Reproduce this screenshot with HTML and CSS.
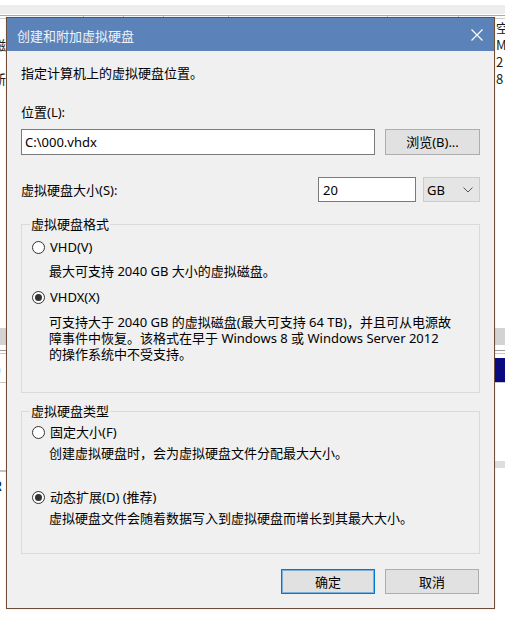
FILE: index.html
```html
<!DOCTYPE html>
<html lang="zh-CN">
<head>
<meta charset="utf-8">
<title>创建和附加虚拟硬盘</title>
<link rel="stylesheet" href="styles.css">
</head>
<body>
<div class="bg">
  <div class="bg-gap5"></div>
  <div class="bg-band"></div>
  <div class="bg-gap1"></div>
  <div class="bg-line-dark"></div>
  <div class="bg-head">
    <span class="sep s1"></span><span class="sep s2"></span><span class="sep s3"></span><span class="sep s4"></span><span class="sep s5"></span><span class="sep s6"></span>
  </div>
  <div class="bg-line-light"></div>
  <div class="bg-rows">
    <div class="bg-row"><span class="lt"></span><span class="rt">空</span></div>
    <div class="bg-row"><span class="lt">磁</span><span class="rt">M</span></div>
    <div class="bg-row"><span class="lt orange">c</span><span class="rt">2</span></div>
    <div class="bg-row"><span class="lt">新</span><span class="rt">8</span></div>
  </div>
  <div class="bg-band2"></div>
  <div class="bg-gap5"></div>
  <div class="bg-line-mid"></div>
  <div class="bg-gap2"></div>
  <div class="bg-line-light"></div>
  <div class="bg-gap4"></div>
  <div class="bg-sel"><span class="lt blue">0</span><span class="navy"></span></div>
  <div class="bg-line-light"></div>
  <div class="bg-fill"><span class="gray-r"></span></div>
  <div class="bg-line-left"></div>
  <div class="bg-row last"><span class="lt blue">R</span><span class="rt"></span></div>
</div>

<div class="dialog">
  <div class="titlebar">
    <span class="title">创建和附加虚拟硬盘</span>
    <svg class="close" width="12" height="12" viewBox="0 0 12 12"><path d="M0.5 0.5 L11.5 11.5 M11.5 0.5 L0.5 11.5" stroke="#ffffff" stroke-width="1.2" fill="none"/></svg>
  </div>
  <div class="content">
    <p class="intro">指定计算机上的虚拟硬盘位置。</p>
    <p class="label">位置(L):</p>
    <div class="path-row">
      <div class="textbox path">C:\000.vhdx</div>
      <div class="btn browse">浏览(B)...</div>
    </div>
    <div class="size-row">
      <span class="size-label">虚拟硬盘大小(S):</span>
      <div class="textbox size">20</div>
      <div class="combo"><span>GB</span><svg width="10" height="6" viewBox="0 0 10 6"><path d="M0.5 0.5 L5 5 L9.5 0.5" stroke="#555" stroke-width="1" fill="none"/></svg></div>
    </div>

    <fieldset class="group g-format">
      <legend>虚拟硬盘格式</legend>
      <div class="radio r1"><span class="circle"></span><span>VHD(V)</span></div>
      <p class="desc d1">最大可支持 2040 GB 大小的虚拟磁盘。</p>
      <div class="radio r2"><span class="circle on"></span><span>VHDX(X)</span></div>
      <p class="desc para">可支持大于 2040 GB 的虚拟磁盘(最大可支持 64 TB)，并且可从电源故<br>障事件中恢复。该格式在早于 Windows 8 或 Windows Server 2012<br>的操作系统中不受支持。</p>
    </fieldset>

    <fieldset class="group g-type">
      <legend>虚拟硬盘类型</legend>
      <div class="radio r3"><span class="circle"></span><span>固定大小(F)</span></div>
      <p class="desc d3">创建虚拟硬盘时，会为虚拟硬盘文件分配最大大小。</p>
      <div class="radio r4"><span class="circle on"></span><span>动态扩展(D) (推荐)</span></div>
      <p class="desc d4">虚拟硬盘文件会随着数据写入到虚拟硬盘而增长到其最大大小。</p>
    </fieldset>

    <div class="actions">
      <div class="btn ok">确定</div>
      <div class="btn">取消</div>
    </div>
  </div>
</div>
</body>
</html>
```

FILE: styles.css
```css
html, body {
  margin: 0;
  padding: 0;
}
body {
  width: 505px;
  height: 621px;
  overflow: hidden;
  position: relative;
  background: #ffffff;
  font-family: "Noto Sans", "Noto Sans CJK SC", sans-serif;
  font-size: 13px;
  color: #000;
}

/* ---------- background window ---------- */
.bg {
  display: flex;
  flex-direction: column;
}
.bg-gap5 { height: 5px; }
.bg-gap1 { height: 1px; }
.bg-gap2 { height: 2px; }
.bg-gap4 { height: 4px; }
.bg-band { height: 9px; background: #ededed; }
.bg-line-dark { height: 1px; background: #a9a9a9; }
.bg-line-mid { height: 1px; background: #9a9a9a; }
.bg-line-light { height: 1px; background: #c9c9c9; }
.bg-head {
  height: 2px;
  display: flex;
}
.sep { width: 1px; height: 2px; background: #c4c4c4; }
.s1 { margin-left: 83px; }
.s2 { margin-left: 39px; }
.s3 { margin-left: 39px; }
.s4 { margin-left: 64px; }
.s5 { margin-left: 158px; }
.s6 { margin-left: 70px; }
.bg-rows {
  height: 309px;
  display: flex;
  flex-direction: column;
}
.bg-row {
  height: 17px;
  line-height: 17px;
  display: flex;
  justify-content: space-between;
  font-family: "Noto Sans CJK SC", sans-serif;
  font-size: 13px;
  color: #1a1a1a;
}
.bg-row.last { margin-top: 5px; }
.lt { margin-left: -7px; width: 13px; }
.rt { width: 9px; }
.orange { color: #d08a20; }
.blue { color: #0a2a6a; font-weight: bold; }
.bg-band2 { height: 17px; background: #d3d3d3; }
.bg-sel {
  height: 24px;
  line-height: 24px;
  display: flex;
  justify-content: space-between;
  font-family: "Noto Sans", sans-serif;
}
.navy { width: 10px; background: #0a0a80; }
.bg-fill {
  height: 87px;
  display: flex;
  justify-content: flex-end;
  align-items: flex-end;
}
.gray-r { width: 10px; height: 7px; background: #dedede; margin-bottom: 2px; }
.bg-line-left { height: 2px; width: 7px; background: #c4c4c4; }

/* ---------- dialog ---------- */
.dialog {
  position: absolute;
  left: 6px;
  top: 17px;
  width: 487px;
  border: 1px solid #6e4d36;
  background: #f0f0f0;
  box-shadow: 0 0 0 1px rgba(0,0,0,0.04);
}
.titlebar {
  height: 33px;
  background: #5b83b9;
  display: flex;
  align-items: center;
  justify-content: space-between;
  padding: 0 11px 0 10px;
}
.title {
  font-family: "Noto Sans CJK SC", sans-serif;
  font-size: 13px;
  color: #eef3fa;
  line-height: 17px;
  margin-top: 1px;
}
.close { display: block; margin-top: 1px; }

.content {
  padding: 14px 14px 14px 14px;
  line-height: 16px;
}
p { margin: 0; }
.intro { line-height: 17px; }
.label { margin-top: 22px; line-height: 17px; }

.path-row {
  margin-top: 8px;
  display: flex;
  gap: 10px;
}
.textbox {
  box-sizing: border-box;
  background: #ffffff;
  border: 1px solid #7a7a7a;
  display: flex;
  align-items: center;
  padding-left: 3px;
  font-family: "Noto Sans", sans-serif;
}
.path { width: 354px; height: 26px; }
.btn {
  box-sizing: border-box;
  background: #e1e1e1;
  border: 1px solid #adadad;
  display: flex;
  align-items: center;
  justify-content: center;
  height: 25px;
  width: 94px;
  font-family: "Noto Sans", "Noto Sans CJK SC", sans-serif;
}
.browse { width: 95px; height: 26px; }

.size-row {
  margin-top: 22px;
  display: flex;
  align-items: center;
  height: 25px;
}
.size-label { flex: 1; }
.size { width: 98px; height: 25px; padding-left: 4px; }
.combo {
  box-sizing: border-box;
  margin-left: 7px;
  width: 57px;
  height: 25px;
  background: #e5e5e5;
  border: 1px solid #cccccc;
  display: flex;
  align-items: center;
  justify-content: space-between;
  padding: 0 6px 0 3px;
  font-family: "Noto Sans", sans-serif;
}

.group {
  margin: 0;
  border: 1px solid #dadada;
  padding: 0 10px;
  min-width: 0;
}
.group legend {
  padding: 0 1px;
  margin-left: -2px;
  line-height: 16px;
  font-family: "Noto Sans CJK SC", sans-serif;
}
.g-format { margin-top: 14px; padding-bottom: 30px; }
.g-type { margin-top: 10px; padding-bottom: 27px; }

.radio {
  display: flex;
  align-items: center;
  gap: 5px;
  height: 16px;
}
.circle {
  box-sizing: border-box;
  width: 13px;
  height: 13px;
  border: 1px solid #333333;
  border-radius: 50%;
  background: #ffffff;
  display: flex;
  align-items: center;
  justify-content: center;
}
.circle.on::after {
  content: "";
  width: 7px;
  height: 7px;
  border-radius: 50%;
  background: #333333;
}
.desc {
  padding-left: 17px;
  white-space: nowrap;
}
.r1 { margin-top: 7px; }
.d1 { margin-top: 8px; }
.r2 { margin-top: 10px; }
.para { margin-top: 9px; }
.r3 { margin-top: 5px; }
.d3 { margin-top: 5px; }
.r4 { margin-top: 28px; }
.d4 { margin-top: 5px; }

.actions {
  margin-top: 15px;
  display: flex;
  justify-content: flex-end;
  gap: 10px;
  padding-right: 1px;
}
.ok {
  border: 1px solid #0078d7;
  box-shadow: inset 0 0 0 1px rgba(0,120,215,0.45);
}
```
